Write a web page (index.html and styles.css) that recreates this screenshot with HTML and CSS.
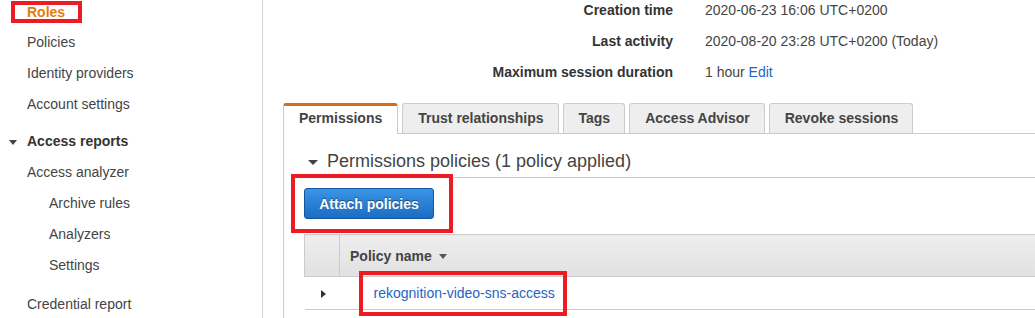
FILE: index.html
```html
<!DOCTYPE html>
<html lang="en">
    <head>
        <meta charset="utf-8">
        <meta name="viewport" content="width=device-width, initial-scale=1.0">
        <title>IAM - Roles</title>
        <link rel="stylesheet" href="styles.css">
    </head>
    <body>
        <nav class="sidebar">
            <div class="nav-item nav-current"><span class="callout callout-roles">Roles</span></div>
            <div class="nav-item">Policies</div>
            <div class="nav-item">Identity providers</div>
            <div class="nav-item">Account settings</div>
            <div class="nav-item nav-group"><span class="caret-down"></span>Access reports</div>
            <div class="nav-item">Access analyzer</div>
            <div class="nav-item nav-sub">Archive rules</div>
            <div class="nav-item nav-sub">Analyzers</div>
            <div class="nav-item nav-sub">Settings</div>
            <div class="nav-item nav-gap">Credential report</div>
        </nav>
        <main class="main">
            <div class="details">
                <div class="label">Creation time</div>
                <div class="value">2020-06-23 16:06 UTC+0200</div>
                <div class="label">Last activity</div>
                <div class="value">2020-08-20 23:28 UTC+0200 (Today)</div>
                <div class="label">Maximum session duration</div>
                <div class="value">1 hour <a href="#">Edit</a></div>
            </div>
            <div class="tabs">
                <div class="tab tab-active">Permissions</div>
                <div class="tab">Trust relationships</div>
                <div class="tab">Tags</div>
                <div class="tab">Access Advisor</div>
                <div class="tab">Revoke sessions</div>
            </div>
            <div class="panel">
                <h2 class="section-title"><span class="caret-down caret-lg"></span>Permissions policies (1 policy applied)</h2>
                <div class="actions">
                    <span class="callout callout-button"><button class="btn-primary">Attach policies</button></span>
                </div>
                <table class="policies">
                    <thead>
                        <tr>
                            <th class="col-toggle"></th>
                            <th>Policy name <span class="caret-down caret-sort"></span></th>
                        </tr>
                    </thead>
                    <tbody>
                        <tr>
                            <td class="col-toggle"><span class="caret-right"></span></td>
                            <td class="col-name"><span class="callout callout-link"><a href="#">rekognition-video-sns-access</a></span></td>
                        </tr>
                    </tbody>
                </table>
            </div>
        </main>
    </body>
</html>
```

FILE: styles.css
```css
body {
    margin: 0;
    display: flex;
    height: 100vh;
    overflow: hidden;
    font-family: "Liberation Sans", Arial, Helvetica, sans-serif;
    font-size: 14px;
    color: #444;
    background: #fff;
}

a {
    color: #1f65c2;
    text-decoration: none;
}

/* red annotation boxes drawn over the screenshot */
.callout {
    position: relative;
    display: inline-block;
}

.callout::after {
    content: "";
    position: absolute;
    border: 4px solid #ec1c24;
    pointer-events: none;
}

.callout-roles::after {
    top: -3px;
    bottom: -3px;
    left: -16px;
    right: -17px;
}

.callout-button::after {
    top: -14px;
    bottom: -14px;
    left: -13px;
    right: -19px;
}

.callout-link::after {
    top: -14px;
    bottom: -15px;
    left: -15px;
    right: -12px;
}

/* sidebar */
.sidebar {
    width: 262px;
    flex-shrink: 0;
    border-right: 1px solid #d5d5d5;
}

.nav-item {
    height: 31px;
    line-height: 31px;
    padding-left: 27px;
    white-space: nowrap;
}

.nav-current {
    height: 23px;
    padding-top: 4px;
    line-height: 16px;
    font-weight: bold;
    color: #e57b0c;
}

.nav-group {
    margin-top: 6px;
    padding-left: 9px;
    font-weight: bold;
    color: #333;
}

.nav-group .caret-down {
    margin-right: 10px;
}

.nav-sub {
    padding-left: 49px;
}

.nav-gap {
    margin-top: 8px;
}

.caret-down {
    display: inline-block;
    width: 0;
    height: 0;
    border-left: 4px solid transparent;
    border-right: 4px solid transparent;
    border-top: 5px solid #444;
    vertical-align: middle;
}

.caret-lg {
    border-left-width: 5px;
    border-right-width: 5px;
    margin-right: 9px;
}

.caret-sort {
    margin-left: 3px;
    border-top-color: #555;
}

.caret-right {
    display: inline-block;
    width: 0;
    height: 0;
    border-top: 4px solid transparent;
    border-bottom: 4px solid transparent;
    border-left: 5px solid #333;
    vertical-align: middle;
}

/* main column */
.main {
    flex: 1;
    min-width: 0;
    padding-left: 20px;
}

.details {
    display: grid;
    grid-template-columns: 390px 1fr;
    column-gap: 32px;
    row-gap: 11px;
    line-height: 20px;
}

.details .label {
    text-align: right;
    font-weight: bold;
    color: #333;
}

.tabs {
    display: flex;
    align-items: flex-end;
    gap: 4px;
    margin-top: 21px;
    height: 30px;
    border-bottom: 1px solid #ccc;
}

.tab {
    box-sizing: border-box;
    height: 30px;
    padding: 0 14px 0 15px;
    line-height: 29px;
    border: 1px solid #ccc;
    border-bottom: none;
    border-radius: 3px 3px 0 0;
    background: #eee;
    font-weight: bold;
    color: #444;
    white-space: nowrap;
}

.tab-active {
    height: 31px;
    margin-bottom: -1px;
    padding: 0 15px 3px;
    line-height: 25px;
    border-top: 3px solid #dd6b10;
    background: #fff;
}

.panel {
    border-left: 1px solid #ccc;
    padding-left: 20px;
    padding-bottom: 20px;
}

.section-title {
    margin: 0;
    padding: 17px 0 5px 4px;
    line-height: 21px;
    font-size: 18px;
    font-weight: normal;
    color: #444;
    border-bottom: 1px solid #ccc;
    white-space: nowrap;
}

.actions {
    padding-top: 10px;
    height: 31px;
}

.btn-primary {
    box-sizing: border-box;
    width: 130px;
    height: 31px;
    padding: 0;
    border: 1px solid #11589e;
    border-radius: 3px;
    background: linear-gradient(#3b95e6, #1a6dc3);
    color: #fff;
    font-family: inherit;
    font-size: 14px;
    font-weight: bold;
    text-shadow: 0 -1px 1px rgba(0, 0, 0, 0.45);
    cursor: pointer;
}

.policies {
    width: 100%;
    margin-top: 15px;
    border-collapse: collapse;
}

.policies th {
    height: 41px;
    padding: 0 0 0 10px;
    text-align: left;
    font-weight: bold;
    color: #444;
    background: linear-gradient(#eeeeee, #e1e1e1);
    border-top: 1px solid #ccc;
    border-bottom: 1px solid #ccc;
}

.policies th.col-toggle {
    width: 34px;
    padding: 0;
    border-left: 1px solid #ccc;
    border-right: 1px solid #ccc;
}

.policies td {
    height: 32px;
    padding: 0;
    border-bottom: 1px solid #ccc;
}

.policies td.col-toggle {
    padding-left: 16px;
}

.policies td.col-name {
    padding-left: 34px;
    line-height: 16px;
}
```
